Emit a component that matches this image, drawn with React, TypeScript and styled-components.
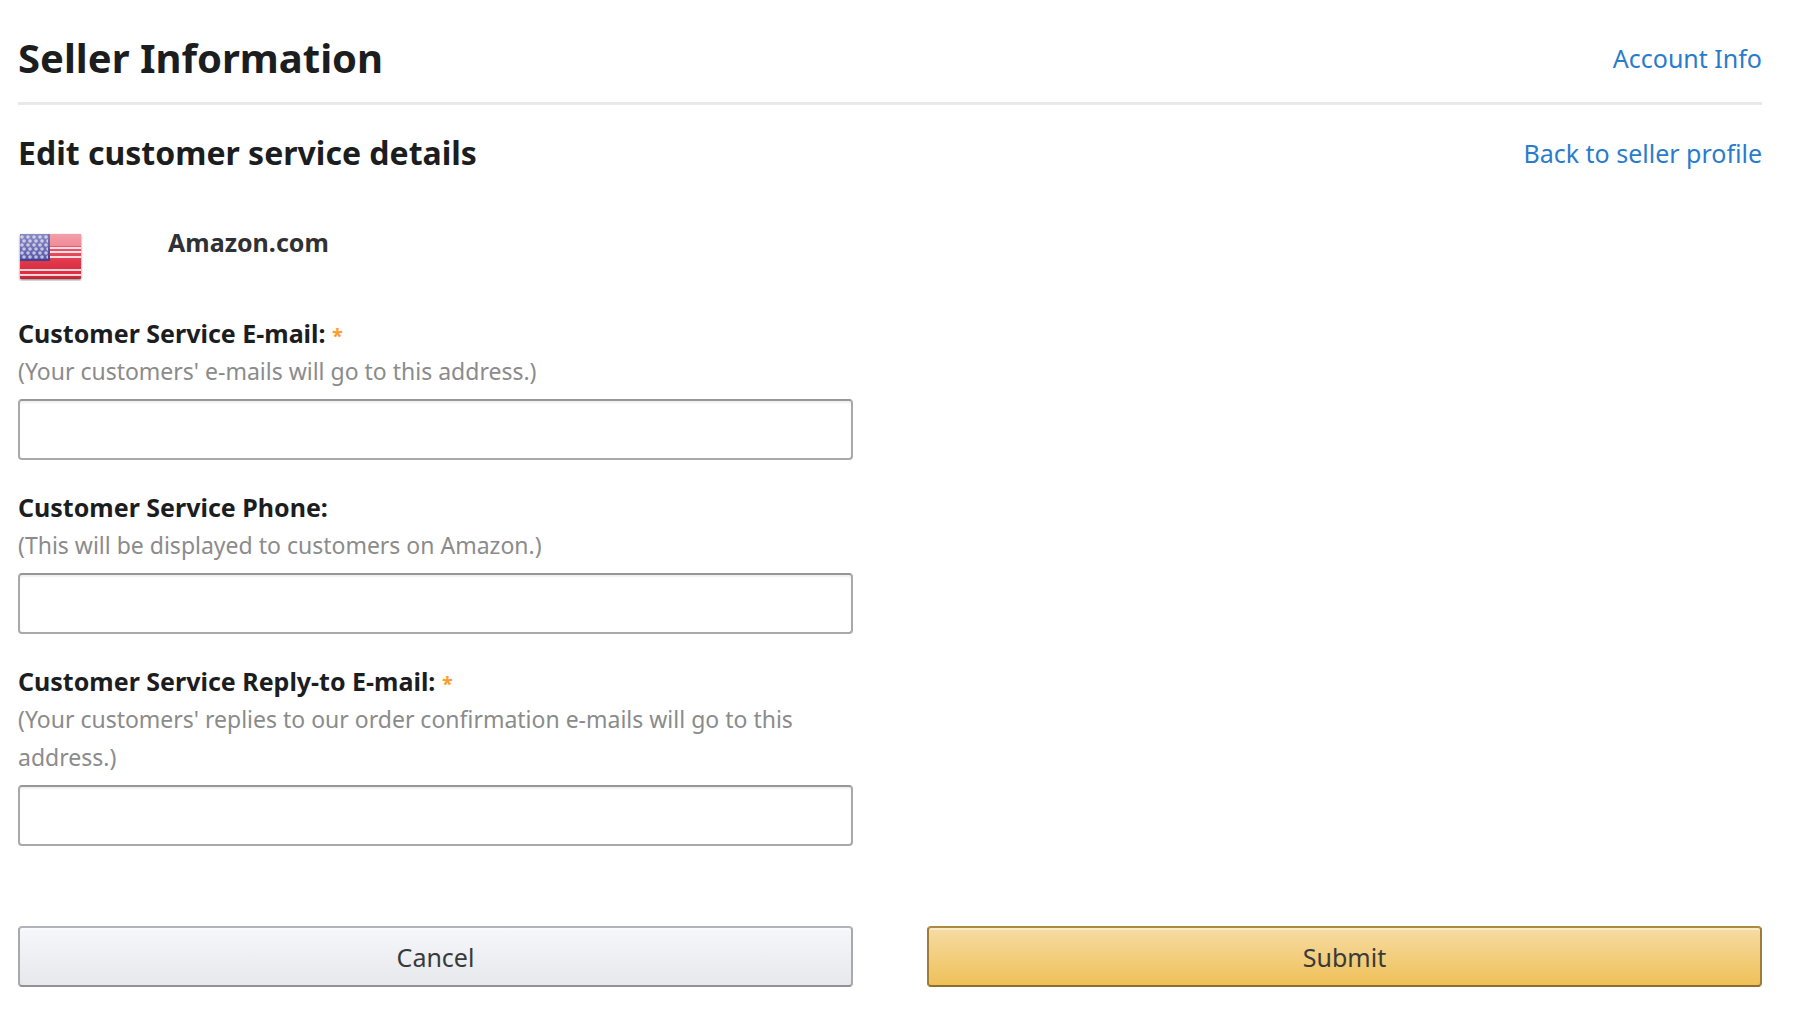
import React, { useId } from 'react';
import styled, { createGlobalStyle } from 'styled-components';

const GlobalStyle = createGlobalStyle`
  *, *::before, *::after { box-sizing: border-box; }
  body {
    margin: 0;
    background: #fff;
    color: #1c1d1f;
    font-family: "Noto Sans", "Open Sans", sans-serif;
    font-size: 25px;
    line-height: 38px;
  }
`;

const Page = styled.main`
  padding: 32px 38px 32px 18px;
`;

const Bar = styled.header<{ $ruled?: boolean }>`
  display: flex;
  justify-content: space-between;
  align-items: center;
  padding-bottom: ${(p) => (p.$ruled ? '18px' : '0')};
  margin-bottom: ${(p) => (p.$ruled ? '22px' : '44px')};
  border-bottom: ${(p) => (p.$ruled ? '3px solid #e9e9e9' : 'none')};
`;

const Title = styled.h1`
  margin: 0;
  font-size: 40px;
  line-height: 52px;
  font-weight: 700;
`;

const Subtitle = styled.h2`
  margin: 0;
  font-size: 32px;
  line-height: 52px;
  font-weight: 700;
`;

const TextLink = styled.a`
  color: #2a7ccb;
  text-decoration: none;
  &:hover { text-decoration: underline; }
`;

const Marketplace = styled.section`
  display: flex;
  gap: 84px;
  margin-bottom: 33px;
`;

const Flag = styled.svg`
  display: block;
  width: 66px;
  height: 58px;
`;

const MarketName = styled.strong`
  color: #303134;
  font-weight: 700;
`;

const Columns = styled.div`
  display: grid;
  grid-template-columns: 1fr 1fr;
  column-gap: 74px;
`;

const Fields = styled.div`
  display: flex;
  flex-direction: column;
  gap: 28px;
  margin-bottom: 80px;
`;

const FieldBox = styled.div`
  display: flex;
  flex-direction: column;
`;

const Label = styled.label`
  font-weight: 700;
`;

const Required = styled.span`
  color: #ff9c2e;
  font-size: 20px;
  line-height: 20px;
`;

const Hint = styled.span`
  color: #8b8b8b;
  font-size: 23px;
  margin-bottom: 9px;
`;

const TextInput = styled.input`
  width: 100%;
  height: 61px;
  padding: 0 16px;
  border: 2px solid #a9a9a9;
  border-top-color: #979797;
  border-radius: 4px;
  background: #fff;
  box-shadow: inset 0 2px 2px rgba(0, 0, 0, 0.06);
  font: inherit;
  color: inherit;
`;

const Button = styled.button<{ $primary?: boolean }>`
  height: 61px;
  padding: 0 20px;
  border: 2px solid;
  border-color: ${(p) => (p.$primary ? '#ad8a42 #9c7c38 #8e6f2c' : '#b0b3b9 #a6a9ae #8f9297')};
  border-radius: 4px;
  background: ${(p) =>
    p.$primary ? 'linear-gradient(#f6dca4, #efc058)' : 'linear-gradient(#f6f7fa, #e7e8ec)'};
  box-shadow: inset 0 2px 0 rgba(255, 255, 255, 0.4);
  color: #393a3c;
  font: inherit;
  cursor: pointer;
`;

function UsFlag() {
  const stars = [];
  for (let row = 0; row < 6; row++) {
    for (let col = 0; col < 5; col++) {
      stars.push(
        <circle key={`${row}-${col}`} cx={4 + col * 6 + (row % 2) * 2} cy={12 + row * 4} r="1.8" fill="#b9b9de" />
      );
    }
  }
  return (
    <Flag viewBox="0 -2 66 58" role="img" aria-label="United States">
      <defs>
        <linearGradient id="gloss" x1="0" y1="0" x2="0" y2="1">
          <stop offset="0" stopColor="#fff" stopOpacity="0.35" />
          <stop offset="0.5" stopColor="#fff" stopOpacity="0.1" />
          <stop offset="0.9" stopColor="#000" stopOpacity="0" />
          <stop offset="1" stopColor="#000" stopOpacity="0.2" />
        </linearGradient>
        <filter id="cast" x="-10%" y="-10%" width="120%" height="125%">
          <feDropShadow dx="0" dy="1" stdDeviation="1" floodColor="#000" floodOpacity="0.5" />
        </filter>
      </defs>
      <rect x="2" y="9" width="61" height="45" rx="1" fill="#e32d42" filter="url(#cast)" />
      <rect x="32" y="9" width="31" height="12" fill="#ec6b7b" />
      <g fill="#fbd9dd">
        <rect x="32" y="22" width="31" height="2" />
        <rect x="32" y="26" width="31" height="2" />
        <rect x="32" y="31" width="31" height="2" />
        <rect x="2" y="44" width="61" height="2" />
        <rect x="2" y="49" width="61" height="2" />
      </g>
      <rect x="2" y="9" width="30" height="27" fill="#4b4ba2" />
      {stars}
      <path d="M2 35h29v-26" fill="none" stroke="#35358f" strokeWidth="2" />
      <rect x="2" y="9" width="61" height="45" rx="1" fill="url(#gloss)" />
    </Flag>
  );
}

interface FieldProps {
  label: string;
  hint: string;
  type: string;
  required?: boolean;
}

function Field({ label, hint, type, required }: FieldProps) {
  const id = useId();
  return (
    <FieldBox>
      <Label htmlFor={id}>
        {label} {required && <Required>*</Required>}
      </Label>
      <Hint id={`${id}-hint`}>{hint}</Hint>
      <TextInput id={id} type={type} required={required} aria-describedby={`${id}-hint`} />
    </FieldBox>
  );
}

export default function App() {
  return (
    <>
      <GlobalStyle />
      <Page>
        <Bar $ruled>
          <Title>Seller Information</Title>
          <TextLink href="#account">Account Info</TextLink>
        </Bar>
        <Bar>
          <Subtitle>Edit customer service details</Subtitle>
          <TextLink href="#profile">Back to seller profile</TextLink>
        </Bar>
        <Marketplace>
          <UsFlag />
          <MarketName>Amazon.com</MarketName>
        </Marketplace>
        <form onSubmit={(e) => e.preventDefault()} noValidate>
          <Columns>
            <Fields>
              <Field label="Customer Service E-mail:" hint="(Your customers' e-mails will go to this address.)" type="email" required />
              <Field label="Customer Service Phone:" hint="(This will be displayed to customers on Amazon.)" type="tel" />
              <Field
                label="Customer Service Reply-to E-mail:"
                hint="(Your customers' replies to our order confirmation e-mails will go to this address.)"
                type="email"
                required
              />
            </Fields>
          </Columns>
          <Columns>
            <Button type="button">Cancel</Button>
            <Button type="submit" $primary>Submit</Button>
          </Columns>
        </form>
      </Page>
    </>
  );
}
